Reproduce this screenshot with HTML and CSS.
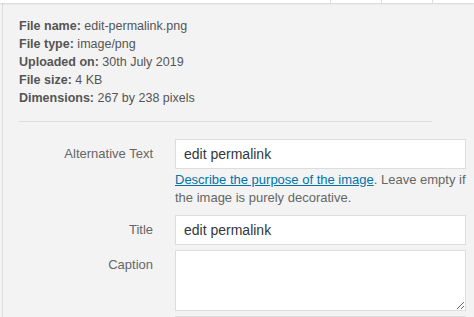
FILE: index.html
```html
<!DOCTYPE html>
<html>
<head>
    <title>Attachment Details</title>
    <link rel="stylesheet" href="styles.css">
</head>
<body>
    <div class="toolbar">
        <div class="toolbar-space"></div>
        <div class="toolbar-btn"></div>
        <div class="toolbar-btn"></div>
        <div class="toolbar-btn last"></div>
    </div>
    <div class="sidebar">
        <div class="details">
            <div><strong>File name:</strong> edit-permalink.png</div>
            <div><strong>File type:</strong> image/png</div>
            <div><strong>Uploaded on:</strong> 30th July 2019</div>
            <div><strong>File size:</strong> 4 KB</div>
            <div><strong>Dimensions:</strong> 267 by 238 pixels</div>
        </div>

        <div class="setting">
            <label for="alt-text">Alternative Text</label>
            <div class="field">
                <input type="text" id="alt-text" value="edit permalink">
                <p class="description"><a href="#">Describe the purpose of the image</a>. Leave empty if the image is purely decorative.</p>
            </div>
        </div>
        <div class="setting">
            <label for="title">Title</label>
            <div class="field">
                <input type="text" id="title" value="edit permalink">
            </div>
        </div>
        <div class="setting">
            <label for="caption">Caption</label>
            <div class="field">
                <textarea id="caption"></textarea>
            </div>
        </div>
        <!-- next field, its label sits below the fold -->
        <div class="setting">
            <label for="description"></label>
            <div class="field">
                <textarea id="description"></textarea>
            </div>
        </div>
    </div>
</body>
</html>
```

FILE: styles.css
```css
body {
    margin: 0;
    background-color: #f3f3f3;
    font-family: "Liberation Sans", Arial, sans-serif;
    overflow: hidden;
}

.toolbar {
    display: flex;
    height: 3px;
    background-color: #fff;
    box-shadow: 0 1px 2px rgba(0, 0, 0, 0.12);
    position: relative;
}

.toolbar-space {
    width: 330px;
}

.toolbar-btn {
    width: 50px;
    border-left: 1px solid #ddd;
}

.toolbar-btn.last {
    flex: 1;
}

.sidebar {
    margin-left: 2px;
    border-left: 1px solid #ddd;
    padding: 14px 8px 0 16px;
}

.details {
    width: 413px;
    padding-bottom: 14px;
    border-bottom: 1px solid #ddd;
    font-size: 12.5px;
    line-height: 18px;
    color: #555;
}

.details strong {
    font-weight: bold;
}

.setting {
    display: grid;
    grid-template-columns: 134px 291px;
    column-gap: 22px;
    margin-bottom: 5px;
}

.details + .setting {
    margin-top: 17px;
}

.setting label {
    text-align: right;
    font-size: 13px;
    line-height: 18px;
    padding-top: 6px;
    color: #666;
}

.setting input,
.setting textarea {
    display: block;
    box-sizing: border-box;
    width: 100%;
    margin: 0;
    border: 1px solid #ddd;
    background-color: #fff;
    font-family: inherit;
    font-size: 14px;
    color: #32373c;
    padding: 0 8px;
}

.setting input {
    height: 30px;
}

.setting textarea {
    height: 61px;
}

.description {
    margin: 2px 0 3px;
    font-size: 13px;
    line-height: 18px;
    color: #666;
}

.description a {
    color: #0073aa;
}
```
